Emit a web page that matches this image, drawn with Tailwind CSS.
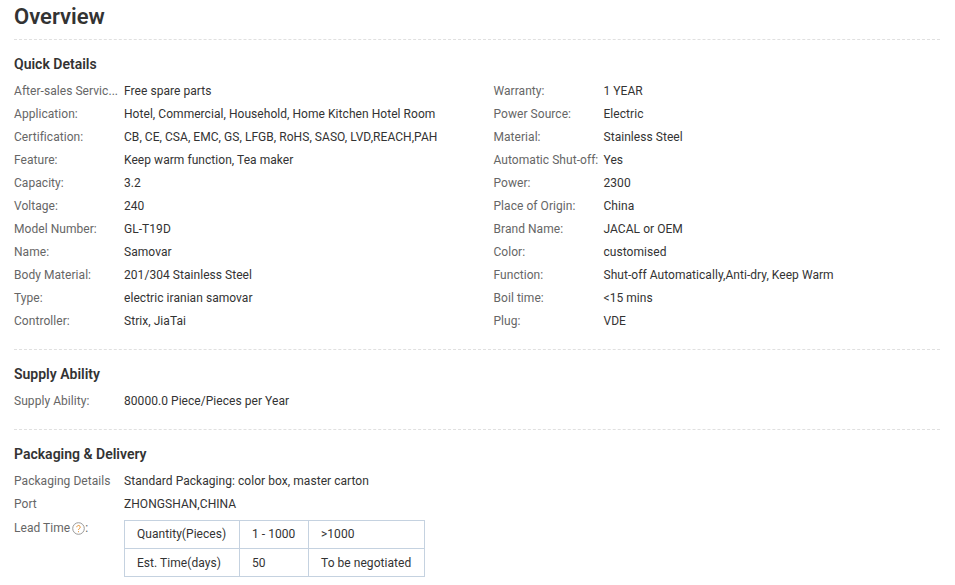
<!DOCTYPE html>
<html lang="en">
<head>
  <meta charset="UTF-8" />
  <title>Overview</title>
  <script src="https://cdn.jsdelivr.net/npm/@tailwindcss/browser@4"></script>
</head>
<body class="bg-white font-['Roboto',sans-serif] text-xs tracking-[0.05px] text-[#333] overflow-hidden">
  <div class="w-[926px] ml-[14px]">
    <h2 class="h-[39px] text-[22px] leading-[34px] tracking-normal font-semibold border-b border-dashed border-[#e0e0e0] box-content">Overview</h2>

    <!-- quick details -->
    <div class="pt-4 pb-[17px] border-b border-dashed border-[#e0e0e0]">
      <h3 class="text-sm leading-4 font-semibold tracking-normal mb-[7px]">Quick Details</h3>
      <div class="grid grid-cols-[479.5px_1fr] auto-rows-[23px] items-center">
        <div class="flex"><span class="w-[110px] text-[#666]">After-sales Servic...</span><span>Free spare parts</span></div>
        <div class="flex"><span class="w-[110px] text-[#666]">Warranty:</span><span>1 YEAR</span></div>
        <div class="flex"><span class="w-[110px] text-[#666]">Application:</span><span>Hotel, Commercial, Household, Home Kitchen Hotel Room</span></div>
        <div class="flex"><span class="w-[110px] text-[#666]">Power Source:</span><span>Electric</span></div>
        <div class="flex"><span class="w-[110px] text-[#666]">Certification:</span><span>CB, CE, CSA, EMC, GS, LFGB, RoHS, SASO, LVD,REACH,PAH</span></div>
        <div class="flex"><span class="w-[110px] text-[#666]">Material:</span><span>Stainless Steel</span></div>
        <div class="flex"><span class="w-[110px] text-[#666]">Feature:</span><span>Keep warm function, Tea maker</span></div>
        <div class="flex"><span class="w-[110px] text-[#666]">Automatic Shut-off:</span><span>Yes</span></div>
        <div class="flex"><span class="w-[110px] text-[#666]">Capacity:</span><span>3.2</span></div>
        <div class="flex"><span class="w-[110px] text-[#666]">Power:</span><span>2300</span></div>
        <div class="flex"><span class="w-[110px] text-[#666]">Voltage:</span><span>240</span></div>
        <div class="flex"><span class="w-[110px] text-[#666]">Place of Origin:</span><span>China</span></div>
        <div class="flex"><span class="w-[110px] text-[#666]">Model Number:</span><span>GL-T19D</span></div>
        <div class="flex"><span class="w-[110px] text-[#666]">Brand Name:</span><span>JACAL or OEM</span></div>
        <div class="flex"><span class="w-[110px] text-[#666]">Name:</span><span>Samovar</span></div>
        <div class="flex"><span class="w-[110px] text-[#666]">Color:</span><span>customised</span></div>
        <div class="flex"><span class="w-[110px] text-[#666]">Body Material:</span><span>201/304 Stainless Steel</span></div>
        <div class="flex"><span class="w-[110px] text-[#666]">Function:</span><span>Shut-off Automatically,Anti-dry, Keep Warm</span></div>
        <div class="flex"><span class="w-[110px] text-[#666]">Type:</span><span>electric iranian samovar</span></div>
        <div class="flex"><span class="w-[110px] text-[#666]">Boil time:</span><span>&lt;15 mins</span></div>
        <div class="flex"><span class="w-[110px] text-[#666]">Controller:</span><span>Strix, JiaTai</span></div>
        <div class="flex"><span class="w-[110px] text-[#666]">Plug:</span><span>VDE</span></div>
      </div>
    </div>

    <!-- supply ability -->
    <div class="pt-4 pb-[17px] border-b border-dashed border-[#e0e0e0]">
      <h3 class="text-sm leading-4 font-semibold tracking-normal mb-[7px]">Supply Ability</h3>
      <div class="flex h-[23px] items-center"><span class="w-[110px] text-[#666]">Supply Ability:</span><span>80000.0 Piece/Pieces per Year</span></div>
    </div>

    <!-- packaging -->
    <div class="pt-4">
      <h3 class="text-sm leading-4 font-semibold tracking-normal mb-[7px]">Packaging &amp; Delivery</h3>
      <div class="flex h-[23px] items-center"><span class="w-[110px] text-[#666]">Packaging Details</span><span>Standard Packaging: color box, master carton</span></div>
      <div class="flex h-[23px] items-center"><span class="w-[110px] text-[#666]">Port</span><span>ZHONGSHAN,CHINA</span></div>
      <div class="flex mt-[5px]">
        <span class="w-[110px] text-[#666] flex items-start leading-[14px] pt-[1px]">Lead Time
          <svg class="ml-[2px] mt-[1px]" width="13" height="13" viewBox="0 0 13 13" fill="none" stroke="#999"><circle cx="6.5" cy="6.5" r="5.8"/><path d="M4.8 5.2a1.7 1.7 0 1 1 2.6 1.4c-.6.4-.9.7-.9 1.4" stroke="#e8912d"/><path d="M6.5 9.2v1" stroke="#e8912d"/></svg>:
        </span>
        <table class="border-collapse border border-[#c5d2e0] w-[301px] h-[57px] table-fixed">
          <tbody>
            <tr class="h-[28px]">
              <td class="w-[115px] border border-[#c5d2e0] pl-3 pb-[2px]">Quantity(Pieces)</td>
              <td class="w-[69px] border border-[#c5d2e0] pl-3 pb-[2px]">1 - 1000</td>
              <td class="border border-[#c5d2e0] pl-3 pb-[2px]">&gt;1000</td>
            </tr>
            <tr>
              <td class="border border-[#c5d2e0] pl-3">Est. Time(days)</td>
              <td class="border border-[#c5d2e0] pl-3">50</td>
              <td class="border border-[#c5d2e0] pl-3">To be negotiated</td>
            </tr>
          </tbody>
        </table>
      </div>
    </div>
  </div>
</body>
</html>
